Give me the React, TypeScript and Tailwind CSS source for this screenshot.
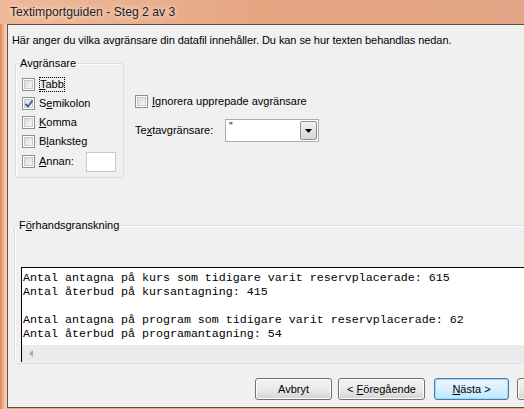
import React from 'react';

const ui = { fontFamily: '"Liberation Sans", Arial, sans-serif' };
const mono = { fontFamily: '"Liberation Mono", "Courier New", monospace' };

const Box = ({ checked = false }: { checked?: boolean }) => (
  <span className="relative flex w-[13px] h-[13px] shrink-0 border border-[#8e8f8f] bg-white p-[1px]">
    <span className="flex-1 border border-[#c6c9ce] bg-gradient-to-br from-[#d8dbe0] to-[#f7f7f7]" />
    {checked && (
      <svg className="absolute left-[1px] top-[1px]" width="10" height="10" viewBox="0 0 10 10">
        <path d="M1.5 5 L4 7.5 L8.5 1.5" fill="none" stroke="#3a56a3" strokeWidth="1.8" />
      </svg>
    )}
  </span>
);

const Row = ({ children, checked }: { children: React.ReactNode; checked?: boolean }) => (
  <div className="flex h-[19px] items-center gap-[4px]">
    <Box checked={checked} />
    {children}
  </div>
);

const Btn = ({ children, focus, w, ml }: { children?: React.ReactNode; focus?: boolean; w: string; ml: string }) => (
  <div
    className={`${w} ${ml} h-[22px] shrink-0 rounded-[3px] border ${focus ? 'border-[#3c7fb1] shadow-[inset_0_0_0_1px_#a6d8f5]' : 'border-[#707070] shadow-[inset_0_0_0_1px_#fcfcfc]'} bg-gradient-to-b ${focus ? 'from-[#eaf6fd] via-[#d9f0fc] to-[#bee6fd]' : 'from-[#f2f2f2] via-[#ebebeb] to-[#d4d4d4]'} flex items-center justify-center text-[11px]`}
  >
    {children}
  </div>
);

export default function App() {
  return (
    <div className="w-[524px] h-[409px] overflow-hidden flex flex-col bg-[#e9a47b] text-black" style={ui}>
      {/* title bar */}
      <div className="h-[24px] shrink-0 flex items-center pl-[10px] bg-gradient-to-r from-[#eeb999] via-[#e5a682] to-[#e2a585]">
        <span className="text-[12.2px] text-[#1e1e1e] [text-shadow:0_0_8px_#fbe3d3,0_0_4px_#fbe3d3]">Textimportguiden - Steg 2 av 3</span>
      </div>

      <div className="flex-1 flex min-h-0">
        <div className="w-[7px] shrink-0 bg-gradient-to-r from-[#dc885a] via-[#eeb48f] to-[#f8dccb]" />
        <div className="flex-1 min-w-0 flex flex-col overflow-hidden bg-[#f0f0f0] border-l border-t border-b border-[#5f4a3d] mb-[1px] text-[11px]">
          <p className="mt-[8px] ml-[4px] leading-[14px] whitespace-nowrap tracking-[-0.07px]">
            Här anger du vilka avgränsare din datafil innehåller. Du kan se hur texten behandlas nedan.
          </p>

          <div className="flex mt-[16px] ml-[7px]">
            {/* delimiter group */}
            <div className="relative w-[109px] h-[115px] shrink-0 rounded-[3px] border border-[#d5dfe5] shadow-[inset_1px_1px_0_#ffffff] pt-[11px] pl-[6px]">
              <span className="absolute left-[3px] top-[-8px] px-[1px] bg-[#f0f0f0] leading-[14px]">Avgränsare</span>
              <Row>
                <span className="border border-dotted border-black leading-[13px]">
                  <u className="underline-offset-[1px]">T</u>abb
                </span>
              </Row>
              <Row checked>
                <span>
                  S<u className="underline-offset-[1px]">e</u>mikolon
                </span>
              </Row>
              <Row>
                <span>
                  <u className="underline-offset-[1px]">K</u>omma
                </span>
              </Row>
              <Row>
                <span>
                  B<u className="underline-offset-[1px]">l</u>anksteg
                </span>
              </Row>
              <div className="flex h-[21px] items-center gap-[4px]">
                <Box />
                <span className="w-[43px]">
                  <u className="underline-offset-[1px]">A</u>nnan:
                </span>
                <span className="w-[30px] h-[20px] bg-white border border-[#c5c9cf]" />
              </div>
            </div>

            {/* right options */}
            <div className="ml-[11px] pt-[32px] flex flex-col">
              <div className="flex items-center gap-[4px] h-[13px]">
                <Box />
                <span>
                  <u className="underline-offset-[1px]">I</u>gnorera upprepade avgränsare
                </span>
              </div>
              <div className="flex items-center mt-[11px]">
                <span className="w-[90px]">
                  Te<u className="underline-offset-[1px]">x</u>tavgränsare:
                </span>
                <div className="w-[94px] h-[23px] flex bg-white border border-[#abadb3]">
                  <span className="flex-1 pl-[3px] pt-[1px] text-[10px] leading-[12px]">"</span>
                  <div className="w-[17px] m-[1px] border border-[#8e8f8f] rounded-[2px] bg-gradient-to-b from-[#f2f2f2] to-[#d6d6d6] flex items-center justify-center">
                    <svg width="7" height="4" viewBox="0 0 7 4">
                      <path d="M0 0 H7 L3.5 4 Z" fill="#000" />
                    </svg>
                  </div>
                </div>
              </div>
            </div>
          </div>

          {/* preview group */}
          <div className="relative mt-[47px] ml-[6px] w-[530px] h-[139px] shrink-0 rounded-[3px] border border-[#d5dfe5] shadow-[inset_1px_1px_0_#ffffff] pt-[41px] pl-[6px]">
            <span className="absolute left-[3px] top-[-8px] px-[1px] bg-[#f0f0f0] leading-[14px]">
              F<u className="underline-offset-[1px]">ö</u>rhandsgranskning
            </span>
            <div className="flex flex-col border-t border-l border-black">
              <div className="h-[77px] bg-white pl-[1px] pt-[3px] text-[11.67px] leading-[14px] whitespace-pre" style={mono}>
                {'Antal antagna på kurs som tidigare varit reservplacerade: 615\nAntal återbud på kursantagning: 415\n\nAntal antagna på program som tidigare varit reservplacerade: 62\nAntal återbud på programantagning: 54'}
              </div>
              <div className="h-[17px] bg-[#ebebeb] flex items-center pl-[7px]">
                <svg width="4" height="7" viewBox="0 0 4 7">
                  <path d="M4 0 V7 L0 3.5 Z" fill="#a9a9a9" />
                </svg>
              </div>
            </div>
          </div>

          {/* buttons */}
          <div className="flex mt-[14px]">
            <Btn w="w-[77px]" ml="ml-[247px]">Avbryt</Btn>
            <Btn w="w-[87px]" ml="ml-[6px]">
              <span>
                &lt; <u className="underline-offset-[1px]">F</u>öregående
              </span>
            </Btn>
            <Btn w="w-[75px]" ml="ml-[9px]" focus>
              <span>
                <u className="underline-offset-[1px]">N</u>ästa &gt;
              </span>
            </Btn>
            <Btn w="w-[75px]" ml="ml-[8px]" />
          </div>
        </div>
      </div>
    </div>
  );
}
